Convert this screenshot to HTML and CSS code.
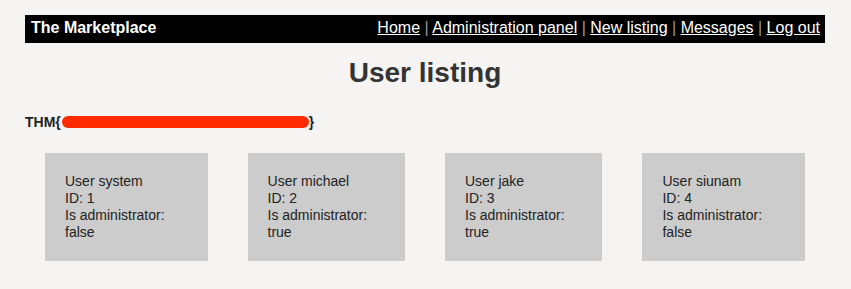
FILE: index.html
```html
<!DOCTYPE html>
<html lang="en">
<head>
  <meta charset="UTF-8" />
  <title>The Marketplace</title>
  <link rel="stylesheet" href="styles.css">
</head>
<body>
  <div class="container">
    <div class="navbar">
      <span class="brand">The Marketplace</span>
      <span class="links">
        <a href="#">Home</a> | <a href="#">Administration panel</a> | <a href="#">New listing</a> | <a href="#">Messages</a> | <a href="#">Log out</a>
      </span>
    </div>

    <h1>User listing</h1>
    <p class="flag">THM{<span class="redacted"></span>}</p>

    <div class="users">
      <div class="user">User system<br>ID: 1<br>Is administrator: false</div>
      <div class="user">User michael<br>ID: 2<br>Is administrator: true</div>
      <div class="user">User jake<br>ID: 3<br>Is administrator: true</div>
      <div class="user">User siunam<br>ID: 4<br>Is administrator: false</div>
    </div>
  </div>
</body>
</html>
```

FILE: styles.css
```css
body {
  margin: 0;
  font-family: "Liberation Sans", Arial, sans-serif;
  font-size: 14px;
  background-color: #f5f4f2;
  color: #333;
}

.container {
  max-width: 800px;
  margin: 15px 0 0 25px;
}

.navbar {
  display: flex;
  justify-content: space-between;
  align-items: center;
  background: #000;
  color: #999;
  font-size: 16px;
  line-height: 18px;
  padding: 4px 5px 6px 6px;
}

.brand {
  color: #fff;
  font-weight: bold;
}

.links a {
  color: #fff;
}

h1 {
  text-align: center;
  font-size: 28px;
  line-height: 32px;
  margin: 14px 0 25px;
}

.flag {
  font-weight: bold;
  line-height: 16px;
  margin: 0 0 23px;
  color: #222;
}

.redacted {
  display: inline-block;
  width: 247px;
  height: 12px;
  margin-left: 1px;
  background: #ff2a00;
  border-radius: 6px;
  vertical-align: -1px;
}

.users {
  display: flex;
}

.user {
  margin: 0 20px;
  padding: 20px 20px;
  background: #cccccc;
  color: #222;
  line-height: 17px;
}
```
